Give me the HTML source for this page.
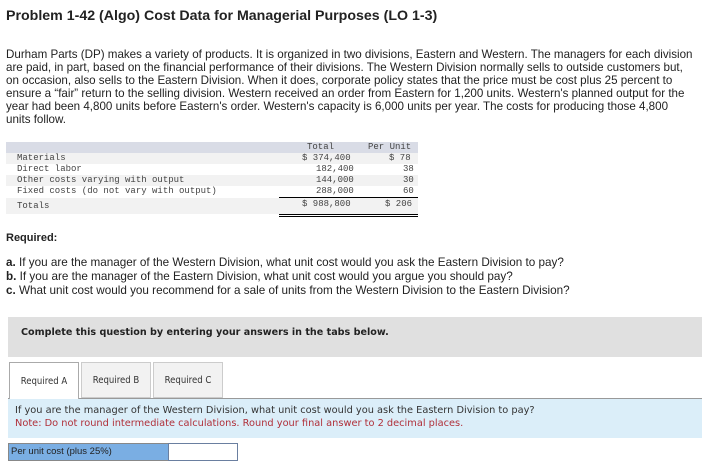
<!DOCTYPE html>
<html><head><style>
body{margin:0;width:707px;height:468px;background:#fff;font-family:"Liberation Sans",sans-serif;color:#222;position:relative;overflow:hidden}
.a{position:absolute}
h1{position:absolute;left:6px;top:8px;margin:0;font-size:14.2px;font-weight:bold;color:#222}
.p{left:6px;top:48px;width:700px;font-size:11.6px;line-height:13px;white-space:nowrap}
.m{font-family:"Liberation Mono",monospace;font-size:9px;color:#444}
.t{left:6px;top:142px;width:412px}
.r{position:absolute;left:0;width:412px;height:11px}
.r span{position:absolute;top:0;line-height:11px;white-space:pre}
.q{font-size:11.7px;line-height:13px;left:6px;white-space:nowrap}
.tab{font-family:"DejaVu Sans Condensed","DejaVu Sans",sans-serif;font-size:9.5px;color:#333}
</style></head><body>
<h1>Problem 1-42 (Algo) Cost Data for Managerial Purposes (LO 1-3)</h1>
<div class="a p">Durham Parts (DP) makes a variety of products. It is organized in two divisions, Eastern and Western. The managers for each division<br>are paid, in part, based on the financial performance of their divisions. The Western Division normally sells to outside customers but,<br>on occasion, also sells to the Eastern Division. When it does, corporate policy states that the price must be cost plus 25 percent to<br>ensure a “fair” return to the selling division. Western received an order from Eastern for 1,200 units. Western's planned output for the<br>year had been 4,800 units before Eastern's order. Western's capacity is 6,000 units per year. The costs for producing those 4,800<br>units follow.</div>
<div class="a t m">
<div class="r" style="top:0;background:#d9dce6"><span style="left:301px">Total</span><span style="left:362px">Per Unit</span></div>
<div class="r" style="top:11px;background:#f2f2f2"><span style="left:11px">Materials</span><span style="left:296px">$ 374,400</span><span style="left:383px">$ 78</span></div>
<div class="r" style="top:22px"><span style="left:11px">Direct labor</span><span style="left:310px">182,400</span><span style="left:397px">38</span></div>
<div class="r" style="top:33px;background:#f2f2f2"><span style="left:11px">Other costs varying with output</span><span style="left:310px">144,000</span><span style="left:397px">30</span></div>
<div class="r" style="top:44px"><span style="left:11px">Fixed costs (do not vary with output)</span><span style="left:310px">288,000</span><span style="left:397px">60</span></div>
<div class="a" style="left:273px;top:55px;width:139px;height:1px;background:#000"></div>
<div class="r" style="top:56px;height:16px;background:#f2f2f2"><span style="left:11px;top:3px">Totals</span><span style="left:296px;top:1px">$ 988,800</span><span style="left:379px;top:1px">$ 206</span></div>
<div class="a" style="left:273px;top:72px;width:139px;height:3px;border-top:1px solid #000;border-bottom:1px solid #000;box-sizing:border-box"></div>
</div>
<div class="a" style="left:6px;top:232px;font-size:11px;font-weight:bold">Required:</div>
<div class="a q" style="top:256px"><b>a.</b> If you are the manager of the Western Division, what unit cost would you ask the Eastern Division to pay?</div>
<div class="a q" style="top:270px"><b>b.</b> If you are the manager of the Eastern Division, what unit cost would you argue you should pay?</div>
<div class="a q" style="top:284px"><b>c.</b> What unit cost would you recommend for a sale of units from the Western Division to the Eastern Division?</div>
<div class="a" style="left:8px;top:317px;width:694px;height:40px;background:#e0e0e0"></div>
<div class="a" style="left:21px;top:327px;font-family:'DejaVu Sans',sans-serif;font-size:9.6px;font-weight:bold;color:#222">Complete this question by entering your answers in the tabs below.</div>
<div class="a" style="left:8px;top:398px;width:694px;height:40px;background:#dbeef9;border-top:1px solid #999;box-sizing:border-box"></div>
<div class="a tab" style="left:9px;top:362px;width:70px;height:37px;background:#fff;border:1px solid #aaa;border-bottom:none;line-height:37px;text-align:center;box-sizing:border-box">Required A</div>
<div class="a tab" style="left:81px;top:362px;width:70px;height:36px;background:#f2f2f2;border:1px solid #ccc;line-height:36px;text-align:center;box-sizing:border-box">Required B</div>
<div class="a tab" style="left:153px;top:362px;width:70px;height:36px;background:#f2f2f2;border:1px solid #ccc;line-height:36px;text-align:center;box-sizing:border-box">Required C</div>
<div class="a" style="left:15px;top:405px;font-family:'DejaVu Sans',sans-serif;font-size:9.8px;line-height:12.5px;color:#333;white-space:nowrap">If you are the manager of the Western Division, what unit cost would you ask the Eastern Division to pay?<br><span style="color:#b0303a">Note: Do not round intermediate calculations. Round your final answer to 2 decimal places.</span></div>
<div class="a" style="left:8px;top:443px;width:161px;height:18px;background:#7aaee3;border:1px solid #888;box-sizing:border-box;font-size:9.5px;line-height:16px;padding-left:2px;color:#222">Per unit cost (plus 25%)</div>
<div class="a" style="left:168px;top:443px;width:70px;height:18px;background:#fff;border:1px solid #6a7fa0;box-sizing:border-box"></div>
</body></html>
